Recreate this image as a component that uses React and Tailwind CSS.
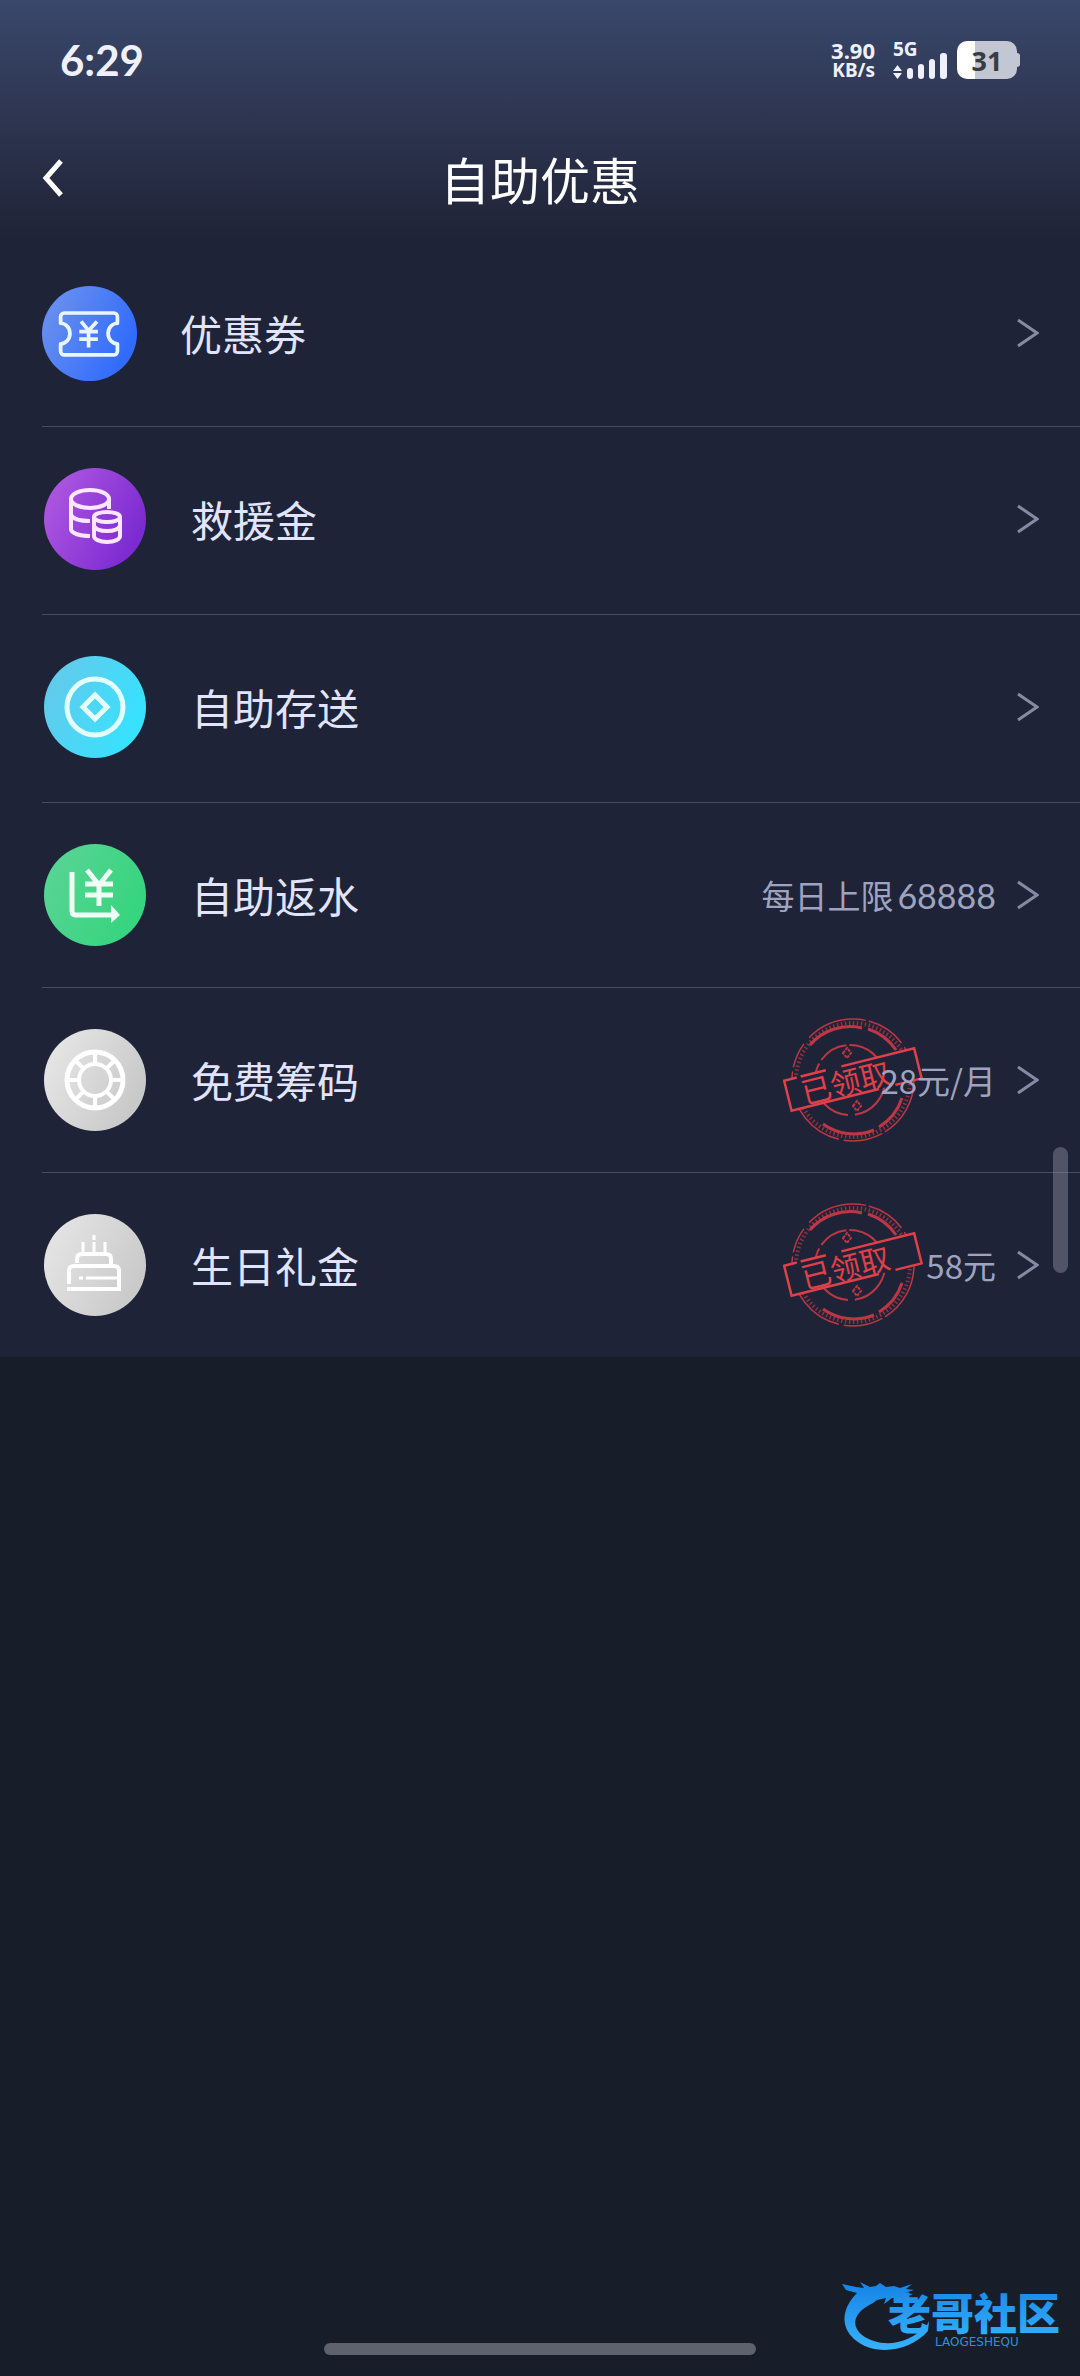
import { clsx } from 'clsx';

function Disc({ id, from, to, children }) {
  return (
    <svg viewBox="0 0 102 102" className="h-full w-full" fill="none" aria-hidden="true">
      <defs>
        <linearGradient id={id} x1="0.1" y1="0.3" x2="0.9" y2="0.7">
          <stop offset="0" stopColor={from} />
          <stop offset="1" stopColor={to} />
        </linearGradient>
      </defs>
      <circle cx="51" cy="51" r="51" fill={`url(#${id})`} />
      {children}
    </svg>
  );
}

function CouponIcon() {
  return (
    <Disc id="disc-coupon" from="#658df0" to="#316bfd">
      <g stroke="#e9f6ff" strokeWidth="4" strokeLinejoin="round">
        <path d="M24 29h53a4 4 0 0 1 4 4v7a10 11 0 0 0 0 22v8a4 4 0 0 1-4 4H24a4 4 0 0 1-4-4v-8a10 11 0 0 0 0-22v-7a4 4 0 0 1 4-4z" />
        <path d="M42 38l8 10 9-10M50 47v19M40 49h20M40 57h20" />
      </g>
    </Disc>
  );
}

function CoinsIcon() {
  return (
    <Disc id="disc-coins" from="#a953df" to="#7c2bd2">
      <g stroke="#fde6ff" strokeWidth="4">
        <ellipse cx="46" cy="31" rx="19" ry="9" />
        <path d="M27 31v30c0 4 8 7 19 7M65 31v10M27 47c2 4 8 6 19 6" />
        <ellipse cx="63" cy="49" rx="13" ry="5" />
        <path d="M50 49v19c0 3 5 6 13 6s13-3 13-6V49M50 58c2 4 6 5 13 5s11-1 13-5" />
      </g>
    </Disc>
  );
}

function DepositIcon() {
  return (
    <Disc id="disc-deposit" from="#61cbec" to="#37e2ff">
      <g stroke="#e3ffff" strokeWidth="5">
        <circle cx="51" cy="51" r="28" />
        <path d="M51 39l12 12-12 12-12-12z" />
      </g>
    </Disc>
  );
}

function RebateIcon() {
  return (
    <Disc id="disc-rebate" from="#55d492" to="#36d57f">
      <g stroke="#f0fff6" strokeWidth="5">
        <path d="M28 28v39q0 4 4 4h36" />
        <path d="M43 26l12 15 12-15M55 40v22M41 40h28M41 51h28" />
      </g>
      <path d="M67 61l9 10-9 8z" fill="#f0fff6" />
    </Disc>
  );
}

function ChipIcon() {
  return (
    <Disc id="disc-chip" from="#e3e3e3" to="#c9c9ca">
      <g stroke="#fff" strokeWidth="4">
        <circle cx="51" cy="51" r="28" strokeWidth="5" />
        <circle cx="51" cy="51" r="16" />
        <path d="M51 22v13M51 67v13M22 51h13M67 51h13M31 31l8 8M71 31l-8 8M31 71l8-8M71 71l-8-8" />
      </g>
    </Disc>
  );
}

function CakeIcon() {
  return (
    <Disc id="disc-cake" from="#e2e2e2" to="#cacacb">
      <g stroke="#fff" strokeWidth="4">
        <path d="M23 75h52V57q0-5-5-5H30q-5 0-5 5v13M33 49v-4q0-5 5-5h24q5 0 5 5v6" />
        <path d="M42 64h33M35 64h4M39 28v12M50 28v12M61 28v12M50 21v5" strokeWidth="3" />
      </g>
    </Disc>
  );
}

// red "already claimed" seal, sits behind the amount
function ClaimedStamp() {
  return (
    <svg viewBox="0 0 140 126" className="h-full w-full" fill="none" role="img">
      <g stroke="#d83b46" strokeOpacity="0.85">
        <circle cx="70" cy="63" r="61" strokeWidth="1.5" strokeDasharray="62 3 40 5 90 4 26 8" />
        <circle cx="70" cy="63" r="57" strokeWidth="4" strokeDasharray="1.5 2.5" strokeOpacity="0.6" />
        <path d="M27 28A53 53 0 0 1 79 11M85 12A53 53 0 0 1 113 33M119 81A53 53 0 0 1 96 110M91 113A53 53 0 0 1 40 107" strokeWidth="3" />
        <circle cx="67" cy="63" r="35" strokeWidth="2" strokeDasharray="50 7 70 4 30 3" />
        <path d="M60 36l4-5 4 5-4 5zM70 89l4-5 4 5-4 5z" strokeWidth="2" strokeDasharray="3 1" />
      </g>
      <g transform="rotate(-14 70 63)">
        <rect x="3" y="47" width="134" height="31" fill="#1f2337" />
        <path d="M16 47H3v31h90M110 78h27V47H62M46 47H20" stroke="#e0404a" strokeWidth="2.5" />
        <text x="17" y="75" fontSize="30" fill="#e0404a" fontFamily="'Noto Sans CJK SC', sans-serif">已领取</text>
      </g>
    </svg>
  );
}

function Chevron() {
  return (
    <svg viewBox="0 0 22 30" className="h-[30px] w-[22px]" fill="none" stroke="#858ba3" strokeWidth="3" aria-hidden="true">
      <path d="M1 2l19 13L1 28" />
    </svg>
  );
}

function StatusBar() {
  return (
    <div className="flex h-[120px] items-center justify-between px-[60px] text-[#eef1fb]">
      <span className="font-['Lato',sans-serif] text-[42px] leading-none font-bold">6:29</span>
      <div className="flex items-center gap-[10px]">
        <div className="mr-2 text-right font-['Noto_Sans',sans-serif] font-bold">
          <div className="text-[22px] leading-[20px]">3.90</div>
          <div className="text-[19px] leading-[20px]">KB/s</div>
        </div>
        <div className="flex h-[38px] flex-col justify-between">
          <span className="h-0 font-['Noto_Sans',sans-serif] text-[19px] leading-[16px] font-bold">5G</span>
          <svg viewBox="0 0 54 26" className="h-[26px] w-[54px]" fill="#eef1fb" aria-hidden="true">
            <path d="M0 18l4.500-6 4.500 6zM0 20l4.500 6 4.500-6z" />
            <rect x="14" y="15" width="6" height="11" rx="3" />
            <rect x="25" y="11" width="6" height="15" rx="3" />
            <rect x="36" y="6" width="6" height="20" rx="3" />
            <rect x="47" y="0" width="7" height="26" rx="3" />
          </svg>
        </div>
        <div className="flex items-center">
          <div className="flex h-[38px] w-[60px] items-center justify-center rounded-[10px] bg-linear-to-r from-white from-30% to-[#c3c7d4] to-30% font-['Noto_Sans',sans-serif] text-[27px] leading-none font-bold text-[#393c41]">
            31
          </div>
          <div className="h-[14px] w-[3px] rounded-r-sm bg-[#c3c7d4]" />
        </div>
      </div>
    </div>
  );
}

const items = [
  { title: '优惠券', icon: CouponIcon, height: 'h-[186px]', compact: true },
  { title: '救援金', icon: CoinsIcon, height: 'h-[187px] pb-1' },
  { title: '自助存送', icon: DepositIcon, height: 'h-[187px] pb-1' },
  { title: '自助返水', icon: RebateIcon, height: 'h-[184px]', note: '每日上限', limit: '68888' },
  { title: '免费筹码', icon: ChipIcon, height: 'h-[184px]', note: '28元/月', claimed: true },
  { title: '生日礼金', icon: CakeIcon, height: 'h-[184px]', note: '58元', claimed: true },
];

function PromoRow({ item }) {
  const Icon = item.icon;
  return (
    <li className="ml-[42px] border-b border-[#484c5e] last:border-b-0">
      <button type="button" className={clsx('relative flex w-full items-center pr-[41px] text-left', item.height)}>
        <span className={clsx('shrink-0', item.compact ? 'mr-[43px] size-[95px]' : 'mr-[45px] ml-[2px] size-[102px]')}>
          <Icon />
        </span>
        <span className="text-[42px] leading-[60px] text-[#e0e4fc]">{item.title}</span>
        {item.claimed && (
          <span className="absolute right-[157px] h-[126px] w-[140px]">
            <ClaimedStamp />
          </span>
        )}
        <span className="relative mr-[21px] ml-auto flex items-baseline text-[33px] leading-[48px] text-[#9ea4c0]">
          {item.note}
          {item.limit && <span className="ml-1 font-['Lato',sans-serif] text-[34px]">{item.limit}</span>}
        </span>
        <Chevron />
      </button>
    </li>
  );
}

function Watermark() {
  return (
    <svg viewBox="0 0 221 72" className="h-[72px] w-[221px]" role="img">
      <defs>
        <linearGradient id="brand" x1="0" y1="0" x2="0" y2="1">
          <stop offset="0" stopColor="#1583e6" />
          <stop offset="1" stopColor="#36b2fb" />
        </linearGradient>
      </defs>
      <path
        d="M0 3l14 3 8 1-4-6 10 5 6-1 4-3 6 4 8-1 6 2 12-4-6 5 8 1-9 3 8 1-12 5-9-1-8 6 2-6-9 2-4 3C12 31 8 44 20 54c18 13 45 11 65-10l2-4-1 10C66 72 31 75 12 58-3 44 1 26 15 12L4 9z"
        fill="url(#brand)"
      />
      <text x="46" y="49" fontSize="43" fontWeight="900" fill="url(#brand)" fontFamily="'Noto Sans CJK SC', sans-serif">
        老哥社区
      </text>
      <text x="93" y="65" fontSize="12" fill="#2f8fd8" fontFamily="'DejaVu Sans', sans-serif">LAOGESHEQU</text>
    </svg>
  );
}

export default function App() {
  return (
    <div className="relative flex min-h-screen flex-col bg-[#181e29] font-['Noto_Sans_CJK_SC',sans-serif]">
      <header className="bg-linear-to-b from-[#3a486c] via-[#2d3550] via-50% to-[#1f2337]">
        <StatusBar />
        <div className="grid h-[120px] grid-cols-[1fr_auto_1fr] items-center px-[42px] pb-1">
          <button type="button" aria-label="返回" className="justify-self-start">
            <svg viewBox="0 0 22 38" className="h-[38px] w-[22px]" fill="none" stroke="#fff" strokeWidth="5" aria-hidden="true">
              <path d="M19 2L4 19l15 17" />
            </svg>
          </button>
          <h1 className="text-[50px] leading-[72px] text-white">自助优惠</h1>
        </div>
      </header>

      <ul className="bg-[#1f2337]">
        {items.map((item) => (
          <PromoRow key={item.title} item={item} />
        ))}
      </ul>

      {/* scroll thumb floats over the list */}
      <div className="absolute top-[1147px] right-[12px] h-[126px] w-[15px] rounded-full bg-[#9a9dac]/40" />

      <footer className="mt-auto">
        <div className="mx-auto mb-[21px] h-[12px] w-2/5 rounded-full bg-[#5e626d]" />
      </footer>

      {/* community watermark stamped on the corner */}
      <div className="absolute right-[17px] bottom-[23px]">
        <Watermark />
      </div>
    </div>
  );
}
